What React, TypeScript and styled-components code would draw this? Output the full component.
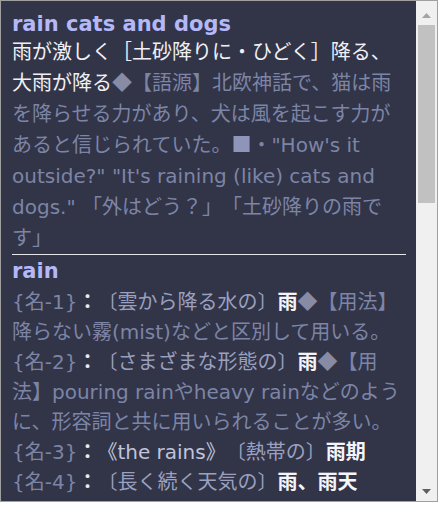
import styled, { createGlobalStyle } from 'styled-components'

const GlobalStyle = createGlobalStyle`
  body {
    margin: 0;
    background: #ffffff;
  }
`

const Frame = styled.div`
  display: flex;
  width: 438px;
  height: 502px;
  box-sizing: border-box;
  border: 1px solid #a0a0a0;
  background: #323448;
`

const Content = styled.div`
  flex: 1;
  overflow: hidden;
  padding: 10px 10px 0 11px;
  font-family: 'DejaVu Sans', 'Noto Sans CJK JP', sans-serif;
  font-size: 20px;
  text-spacing-trim: space-all;
  text-autospace: no-autospace;
`

const Entry = styled.section<{ divider?: boolean; top?: number }>`
  padding-top: ${props => props.top ?? 0}px;
  border-bottom: ${props => (props.divider ? '1px solid #e6e6ee' : 'none')};
`

const Heading = styled.h2<{ gap?: number }>`
  margin: 0 0 ${props => props.gap ?? 0}px;
  font-size: 21px;
  font-weight: bold;
  line-height: 26px;
  color: #b4b8f8;
`

const Para = styled.p<{ lh: number }>`
  margin: 0;
  line-height: ${props => props.lh}px;
  color: #7c85a6;
`

const Main = styled.span`
  color: #f0f0f4;
`

const Note = styled.span<{ tone?: 'gloss' | 'light' }>`
  color: ${props =>
    props.tone === 'light' ? '#c0c4dc' : props.tone === 'gloss' ? '#9aa0bf' : '#7c85a6'};
`

const Sym = styled.span<{ light?: boolean }>`
  font-family: 'Noto Sans CJK JP', sans-serif;
  line-height: 1;
  color: ${props => (props.light ? '#8f95b8' : '#878ba3')};
`

const Label = styled.span`
  color: #7c85a6;
`

const Colon = styled.span`
  font-weight: bold;
  color: #e8e8f0;
`

const Trans = styled.span`
  font-weight: bold;
  color: #f4f4fa;
`

const ScrollBar = styled.div`
  display: flex;
  flex-direction: column;
  width: 21px;
  background: #f0f0f0;
`

const ArrowButton = styled.div<{ down?: boolean }>`
  display: flex;
  justify-content: center;
  align-items: ${props => (props.down ? 'flex-end' : 'flex-start')};
  height: 24px;
  box-sizing: border-box;
  padding: ${props => (props.down ? '0 0 7px' : '12px 0 0')};
`

const Track = styled.div`
  flex: 1;
  padding: 0 2px;
`

const Thumb = styled.div`
  height: 178px;
  background: #c1c1c1;
`

function Arrow({ down }: { down?: boolean }) {
  return (
    <svg width="9" height="5" viewBox="0 0 9 5">
      <polygon
        points={down ? '0,0 9,0 4.5,5' : '0,5 4.5,0 9,5'}
        fill={down ? '#606060' : '#a3a3a3'}
      />
    </svg>
  )
}

function App() {
  return (
    <>
      <GlobalStyle />
      <Frame>
        <Content>
          <Entry divider>
            <Heading>rain cats and dogs</Heading>
            <Para lh={31}>
              <Main>雨が激しく［土砂降りに・ひどく］降る、大雨が降る</Main>
              <Sym>◆</Sym>
              <Note>【語源】北欧神話で、猫は雨を降らせる力があり、犬は風を起こす力があると信じられていた。</Note>
              <Sym light>■</Sym>
              <Note>・"How's it outside?" "It's raining (like) cats and dogs." 「外はどう？」「土砂降りの雨です」</Note>
            </Para>
          </Entry>
          <Entry top={3}>
            <Heading gap={3}>rain</Heading>
            <Para lh={30}>
              <Label>{'{名-1}'}</Label>
              <Colon>：</Colon>
              <Note tone="gloss">〔雲から降る水の〕</Note>
              <Trans>雨</Trans>
              <Sym>◆</Sym>
              <Note>【用法】降らない霧(mist)などと区別して用いる。</Note>
            </Para>
            <Para lh={30}>
              <Label>{'{名-2}'}</Label>
              <Colon>：</Colon>
              <Note tone="gloss">〔さまざまな形態の〕</Note>
              <Trans>雨</Trans>
              <Sym>◆</Sym>
              <Note>【用法】pouring rainやheavy rainなどのように、形容詞と共に用いられることが多い。</Note>
            </Para>
            <Para lh={30}>
              <Label>{'{名-3}'}</Label>
              <Colon>：</Colon>
              <Note tone="light">《the rains》</Note>
              <Note tone="gloss">〔熱帯の〕</Note>
              <Trans>雨期</Trans>
            </Para>
            <Para lh={30}>
              <Label>{'{名-4}'}</Label>
              <Colon>：</Colon>
              <Note tone="gloss">〔長く続く天気の〕</Note>
              <Trans>雨、雨天</Trans>
            </Para>
          </Entry>
        </Content>
        <ScrollBar>
          <ArrowButton>
            <Arrow />
          </ArrowButton>
          <Track>
            <Thumb />
          </Track>
          <ArrowButton down>
            <Arrow down />
          </ArrowButton>
        </ScrollBar>
      </Frame>
    </>
  )
}

export default App
